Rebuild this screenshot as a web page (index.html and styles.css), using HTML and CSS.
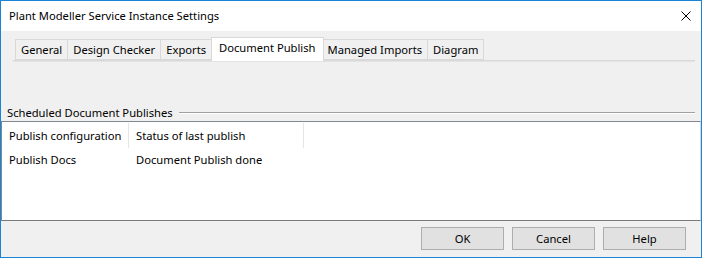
FILE: index.html
```html
<!DOCTYPE html>
<html>
<head>
<meta charset="utf-8">
<link rel="stylesheet" href="styles.css">
</head>
<body>
<div class="window">
  <div class="titlebar">
    <span class="title">Plant Modeller Service Instance Settings</span>
    <svg class="close" width="10" height="10" viewBox="0 0 10 10"><path d="M0.5 0.5 L9.5 9.5 M9.5 0.5 L0.5 9.5" stroke="#000" stroke-width="1" fill="none"/></svg>
  </div>
  <div class="body">
    <div class="tabbar">
      <div class="tabs">
        <div class="tab">General</div>
        <div class="tab">Design Checker</div>
        <div class="tab">Exports</div>
        <div class="tab active">Document Publish</div>
        <div class="tab">Managed Imports</div>
        <div class="tab">Diagram</div>
      </div>
      <div class="pane"></div>
    </div>
    <div class="group">
      <span class="group-label">Scheduled Document Publishes</span>
      <span class="group-line"></span>
    </div>
    <div class="list">
      <div class="row header">
        <div class="cell c1">Publish configuration</div>
        <div class="cell c2">Status of last publish</div>
      </div>
      <div class="row">
        <div class="cell c1">Publish Docs</div>
        <div class="cell c2 plain">Document Publish done</div>
      </div>
    </div>
    <div class="footer">
      <button class="btn">OK</button>
      <button class="btn">Cancel</button>
      <button class="btn">Help</button>
    </div>
  </div>
</div>
</body>
</html>
```
FILE: styles.css
```css
* { box-sizing: border-box; }
html, body { margin: 0; padding: 0; }
body {
  font-family: "Noto Sans", "Open Sans", sans-serif;
  font-size: 11.2px;
  color: #000;
  background: #fff;
}
.window {
  width: 702px;
  height: 258px;
  border: 1px solid #1883d7;
  display: flex;
  flex-direction: column;
}
.titlebar {
  height: 30px;
  background: #fff;
  display: flex;
  align-items: center;
  padding-left: 8px;
  padding-right: 10px;
}
.title { flex: 1; line-height: 16px; }
.close { display: block; }
.body {
  flex: 1;
  background: #f0f0f0;
  display: flex;
  flex-direction: column;
}
.tabbar {
  padding: 6px 6px 0 12px;
}
.tabs {
  display: flex;
  align-items: flex-end;
  height: 23px;
  padding-left: 2px;
}
.tab {
  height: 21px;
  line-height: 19px;
  padding: 0 5px;
  border: 1px solid #d9d9d9;
  border-left: none;
  background: #f0f0f0;
  white-space: nowrap;
}
.tab:first-child { border-left: 1px solid #d9d9d9; }
.tab.active {
  height: 24px;
  line-height: 20px;
  background: #fff;
  border-left: 1px solid #d9d9d9;
  border-bottom: none;
  padding: 0 7px;
  margin: 0 -1px -1px -1px;
  position: relative;
  z-index: 1;
}
.pane {
  height: 2px;
  border-top: 1px solid #d9d9d9;
  background: #e3e3e3;
}
.group {
  margin-top: 42px;
  height: 17px;
  display: flex;
  align-items: center;
  padding-left: 6px;
  padding-right: 6px;
}
.group-label { line-height: 16px; white-space: nowrap; }
.group-line {
  flex: 1;
  margin-left: 6px;
  height: 2px;
  border-top: 1px solid #a0a0a0;
  border-bottom: 1px solid #fff;
}
.list {
  height: 100px;
  background: #fff;
  border: 1px solid #828790;
  border-bottom-color: #7a7a7a;
  border-right-color: #d9d9d9;
  padding-top: 1px;
}
.row {
  display: flex;
  height: 23px;
  align-items: center;
}
.row.header { height: 25px; }
.cell {
  line-height: 16px;
  padding-left: 7px;
  white-space: nowrap;
}
.c1 { width: 127px; }
.c2 { width: 175px; }
.header .cell { border-right: 1px solid #e5e5e5; height: 25px; line-height: 25px; }
.footer {
  flex: 1;
  display: flex;
  justify-content: flex-end;
  align-items: flex-start;
  gap: 8px;
  padding: 6px 15px 0 0;
}
.btn {
  width: 83px;
  height: 23px;
  background: #e1e1e1;
  border: 1px solid #adadad;
  font: inherit;
  color: #000;
  padding: 0;
  margin: 0;
}
```
